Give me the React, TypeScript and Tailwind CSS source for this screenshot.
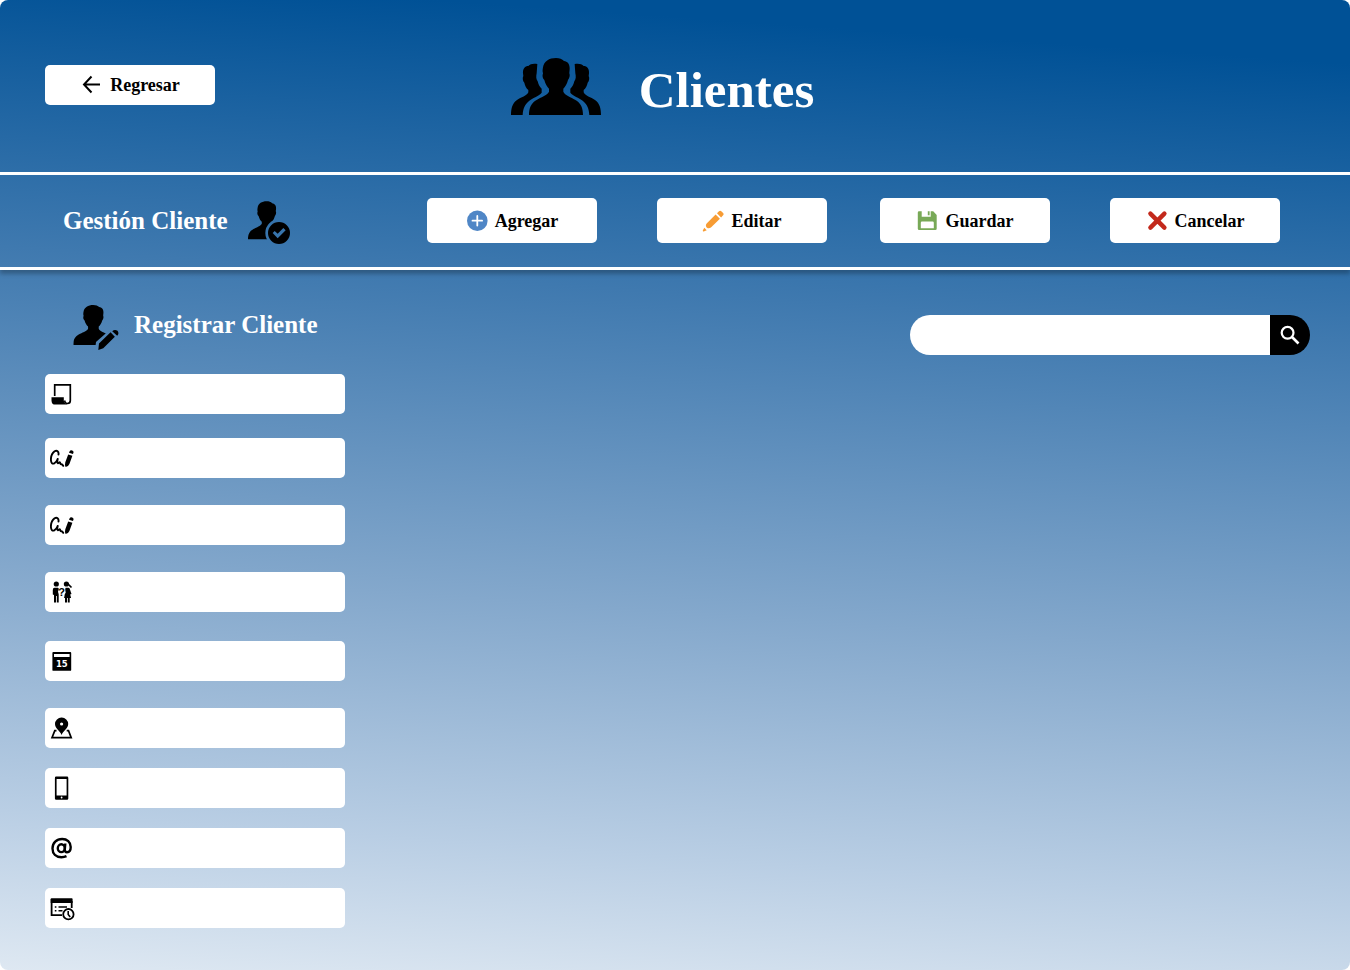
import type { ReactNode } from "react";

const BUST =
  "M81 0C92 0 99 3 105 9C115 10 122 18 122 30C122 38 121 42 121 46C124 52 121 62 117 66C114 78 109 86 103 92V101C107 112 128 118 138 125C156 135 162 150 162 171H0C0 150 6 135 24 125C34 118 55 112 60 101V92C54 86 49 78 46 66C41 62 39 54 42 46C40 40 41 34 42 28C45 10 60 0 81 0Z";

function PeopleIcon() {
  const side =
    "M79 18C66 16 58 18 52 24C42 24 35 32 36 46L37 54C34 58 35 70 40 74C42 84 46 91 52 96V103C48 114 30 118 18 126C4 136 0 152 0 171H35C36 152 41 140 55 128C66 119 84 114 92 104V92C85 86 82 78 80 70C75 64 75 56 77 46Z";
  return (
    <svg className="h-[57px] w-[90px]" viewBox="0 0 270 171" aria-hidden="true">
      <path d={side} />
      <path d={side} transform="translate(270 0) scale(-1 1)" />
      <path d={BUST} transform="translate(54 0)" />
    </svg>
  );
}

function UserCheckIcon() {
  return (
    <svg className="h-[43px] w-[42px]" viewBox="0 0 126 129" aria-hidden="true">
      <mask id="check-cut" maskUnits="userSpaceOnUse" x="0" y="0" width="126" height="129">
        <rect width="126" height="129" fill="#fff" />
        <circle cx="93" cy="96" r="41" fill="#000" />
      </mask>
      <g mask="url(#check-cut)">
        <path d={BUST} transform="translate(0 1) scale(0.69 0.665)" />
      </g>
      <path
        fillRule="evenodd"
        d="M93 63a33 33 0 1 0 0 66a33 33 0 0 0 0-66ZM74 96l6-6 9 8 17-17 7 7-24 24Z"
      />
    </svg>
  );
}

function UserEditIcon() {
  return (
    <svg className="h-[45px] w-[46px]" viewBox="0 0 138 136" aria-hidden="true">
      <mask id="edit-cut" maskUnits="userSpaceOnUse" x="0" y="0" width="138" height="136">
        <rect width="138" height="136" fill="#fff" />
        <path d="M66 136L69 112L123 64L160 94L90 150Z" fill="#000" />
      </mask>
      <g mask="url(#edit-cut)">
        <path d={BUST} transform="scale(0.75 0.708)" />
      </g>
      <path d="M76 136l2-20 35-34 13 14-35 35ZM118 79q8-7 16-1q6 8-1 15Z" />
    </svg>
  );
}

function ArrowIcon() {
  return (
    <svg className="size-6" viewBox="0 0 24 24" fill="none" stroke="currentColor" strokeWidth="2" aria-hidden="true">
      <path d="M20 11.500H4.500M11.500 3.500L4 11.500L11.500 19.500" />
    </svg>
  );
}

function PlusIcon() {
  return (
    <svg className="size-[22px]" viewBox="0 0 22 22" aria-hidden="true">
      <circle cx="11.300" cy="10.700" r="10.300" fill="#4f86c6" />
      <path d="M11.300 5.900v9.600M6.500 10.700h9.600" stroke="#fff" strokeWidth="1.800" strokeLinecap="round" />
    </svg>
  );
}

function PencilIcon() {
  return (
    <svg className="size-[22px]" viewBox="0 0 22 22" fill="#f79c34" aria-hidden="true">
      <path d="M13.600 4.400l4.300 4.300L9.200 17.300q-1.600 1.300-3.400.900Q3.800 17.600 3.900 15.500q0-1.200 1-2.200ZM15 3.300l2-2.100q1.200-1 2.300 0l1.800 1.900q1 1.200 0 2.200l-2 2.100ZM2.300 17.800l2.400 2.400-2.900 1.300q-1.100.3-1-.9Z" />
    </svg>
  );
}

function SaveIcon() {
  return (
    <svg className="size-[22px]" viewBox="0 0 22 22" aria-hidden="true">
      <path
        fill="#78a957"
        fillRule="evenodd"
        d="M3 1.300h2.700v5.400h9V1.300h2.500l3.500 3.600v13.800q0 1.400-1.400 1.400H3.200q-1.400 0-1.400-1.400V2.500q0-1.200 1.200-1.200ZM6 11.600q-1.200 0-1.200 1.200v5.500h13v-5.500q0-1.200-1.200-1.200ZM11.800 1.300h1.800v4h-1.800Z"
      />
    </svg>
  );
}

function CrossIcon() {
  return (
    <svg className="size-[22px]" viewBox="0 0 22 22" aria-hidden="true">
      <path d="M4.400 3.600l14 14M18.400 3.600L4.400 17.600" stroke="#c3291c" strokeWidth="4.400" strokeLinecap="round" />
    </svg>
  );
}

function SearchIcon() {
  return (
    <svg className="size-6" viewBox="0 0 24 24" fill="none" stroke="#fff" strokeWidth="2.200" aria-hidden="true">
      <circle cx="9.600" cy="9.800" r="5.900" />
      <path d="M14 14l6.500 6.500" strokeWidth="2.600" />
    </svg>
  );
}

function ScrollIcon() {
  return (
    <svg className="size-6" viewBox="0 0 24 24" aria-hidden="true">
      <path
        d="M4.700 14V2.900h15.600V18.500q0 3-2.800 3t-2.700-3"
        fill="none"
        stroke="#000"
        strokeWidth="1.700"
      />
      <path d="M1.500 15.200h12.300v3.200q0 2.500 3.700 4.200H5.500q-4 0-4-4.200Z" />
    </svg>
  );
}

function SignatureIcon() {
  return (
    <svg className="size-6" viewBox="0 0 24 24" aria-hidden="true">
      <path
        d="M8.500 8.600C9 5.200 6.800 3.900 4.600 5.200C2.200 7 .900 10.500 .900 13.500C.900 17 2.400 18.300 4.300 17.300C5.800 16.500 6.900 15 7.700 13C7.200 15 6.900 17 7.900 17.200C8.700 17.300 9.200 16 9.900 16.300C10.600 16.700 10 18.300 11 18.300C11.900 18.200 12.200 18 13.200 19.800"
        fill="none"
        stroke="#000"
        strokeWidth="1.900"
        strokeLinecap="round"
        strokeLinejoin="round"
      />
      <path d="M18.200 8.400l4.200 1.300-3 8.200q-.9 2.300-3.800 3.200-1.100-2.100-.3-4.800ZM19 6.800l.5-1.400q.8-1.600 2.800-1 1.700.8 1.200 2.400l-.6 1.300Z" />
    </svg>
  );
}

function PeopleQuestionIcon() {
  return (
    <svg className="size-6" viewBox="0 0 24 24" aria-hidden="true">
      <circle cx="6.300" cy="4" r="2.600" />
      <circle cx="16.400" cy="4" r="2.600" />
      <path d="M17.500 3.500l4 4" stroke="#000" strokeWidth="1.700" />
      <path d="M4.500 7.800h3.400l1 1-.9 3 .7 2.500v8.300H7V16h-.8v6.600H4V15l-1.200-.5V10q0-2.200 1.700-2.200ZM15.600 7.800h2.700q1.200 0 1.600 1.400L21.500 14l-1.300.6.900 3.400h-1.400v4.600h-1.900V18H17v4.600h-2V18h-.9l.7-4 .9-1.200q-.3-2-.5-3.500Z" />
      <text x="11.600" y="16" textAnchor="middle" fontSize="11" fontWeight="700" className="font-['Liberation_Sans',sans-serif]">
        ?
      </text>
    </svg>
  );
}

function CalendarIcon() {
  return (
    <svg className="size-6" viewBox="0 0 24 24" aria-hidden="true">
      <path
        fillRule="evenodd"
        d="M3.300 3h17q.9 0 .9.900v17q0 .9-.9.900h-17q-.9 0-.9-.9v-17q0-.9.900-.9ZM4 5v3h15.600V5Z"
      />
      <text x="11.800" y="17.900" textAnchor="middle" fill="#fff" fontSize="8.500" fontWeight="700" className="font-['DejaVu_Sans',sans-serif]">
        15
      </text>
    </svg>
  );
}

function MapPinIcon() {
  return (
    <svg className="size-6" viewBox="0 0 24 24" aria-hidden="true">
      <path d="M6.500 14.600H4.800L2 21.700H21.200L18.500 14.600H16.700" fill="none" stroke="#000" strokeWidth="1.700" />
      <path
        fillRule="evenodd"
        d="M11.600 1.600a6.500 6.500 0 0 1 6.600 6.500c0 4.500-4.800 6.300-6.600 11C9.800 14.400 5 12.600 5 8.100a6.500 6.500 0 0 1 6.600-6.500ZM11.600 6.400a1.600 1.600 0 1 0 0 3.200a1.600 1.600 0 0 0 0-3.200Z"
      />
    </svg>
  );
}

function PhoneIcon() {
  return (
    <svg className="size-6" viewBox="0 0 24 24" aria-hidden="true">
      <path
        fillRule="evenodd"
        d="M6.200.6h10.800q1.300 0 1.300 1.300v20.600q0 1.300-1.300 1.300H6.200q-1.300 0-1.300-1.300V1.900Q4.900.6 6.200.6ZM6.600 3v16.400h10V3Z"
      />
      <circle cx="11.600" cy="21.500" r=".9" fill="#fff" />
    </svg>
  );
}

function AtIcon() {
  return (
    <svg className="size-6" viewBox="0 0 24 24" fill="none" stroke="#000" strokeWidth="2.400" aria-hidden="true">
      <ellipse cx="11.300" cy="12.200" rx="3.500" ry="3.900" />
      <path d="M15.300 7.500L14.800 13.500C14.800 15.500 15.600 16.200 17 16.200C19.500 16.200 20.700 14 20.700 11C20.700 6 17 3 12.200 3C6.500 3 2.500 7 2.500 12.500C2.500 17.800 6 21.200 11.500 21.200C13.500 21.200 15.200 20.800 16.500 20.200" />
    </svg>
  );
}

function ScheduleIcon() {
  return (
    <svg className="size-[26px]" viewBox="0 0 26 26" fill="none" stroke="#000" aria-hidden="true">
      <path d="M1.600 4v16.200h10.400M21.700 6v7" strokeWidth="1.800" />
      <path d="M.700 4q0-.8.800-.8h20.300q.8 0 .8.800v4H.700Z" fill="#000" stroke="none" />
      <path d="M4.800 12h1.600M8.500 12h8.500M4.800 15.700h1.600M8.500 15.700h4" strokeWidth="1.600" />
      <circle cx="18.400" cy="19.200" r="5.200" strokeWidth="1.800" />
      <path d="M18.200 16v3.500l2 2.400" strokeWidth="1.600" />
    </svg>
  );
}

type Field = { name: string; label: string; type: string; spacing: string; icon: ReactNode };

const fields: Field[] = [
  { name: "documento", label: "Documento", type: "text", spacing: "mt-6", icon: <ScrollIcon /> },
  { name: "nombre", label: "Nombre", type: "text", spacing: "mt-6", icon: <SignatureIcon /> },
  { name: "apellido", label: "Apellido", type: "text", spacing: "mt-[27px]", icon: <SignatureIcon /> },
  { name: "genero", label: "Género", type: "text", spacing: "mt-[27px]", icon: <PeopleQuestionIcon /> },
  { name: "nacimiento", label: "Fecha de nacimiento", type: "text", spacing: "mt-[29px]", icon: <CalendarIcon /> },
  { name: "direccion", label: "Dirección", type: "text", spacing: "mt-[27px]", icon: <MapPinIcon /> },
  { name: "telefono", label: "Teléfono", type: "tel", spacing: "mt-5", icon: <PhoneIcon /> },
  { name: "correo", label: "Correo", type: "email", spacing: "mt-5", icon: <AtIcon /> },
  { name: "registro", label: "Fecha de registro", type: "text", spacing: "mt-5", icon: <ScheduleIcon /> },
];

function ActionButton({ icon, children }: { icon: ReactNode; children: ReactNode }) {
  return (
    <button
      type="button"
      className="flex h-[45px] w-[170px] items-center justify-center gap-[7px] rounded-[5px] bg-white text-lg font-bold"
    >
      {icon}
      {children}
    </button>
  );
}

export default function App() {
  return (
    <div className="flex min-h-screen flex-col overflow-hidden rounded-lg bg-[linear-gradient(184deg,#005196_6%,#3f79af_32%,#84a8cc_62%,#b9cee4_85%,#dee8f2_100%)] font-['Liberation_Serif',serif] text-black">
      <header className="grid h-[175px] grid-cols-[1fr_auto_1fr] items-center border-b-[3px] border-white pr-[70px] pb-[2px] pl-[45px]">
        <button
          type="button"
          className="flex h-10 w-[170px] items-center justify-center gap-[6px] rounded-[5px] bg-white text-lg font-bold"
        >
          <ArrowIcon />
          Regresar
        </button>
        <div className="flex items-center gap-[38px] pt-[3px]">
          <PeopleIcon />
          <h1 className="pt-[7px] text-[51px] leading-[60px] font-bold text-white">Clientes</h1>
        </div>
      </header>

      <section className="flex h-[95px] items-center justify-between border-b-[3px] border-white pr-[70px] pb-px pl-[63px] shadow-[0_4px_4px_rgba(0,0,0,0.25)]">
        <div className="flex items-center gap-5">
          <h2 className="text-[25px] leading-8 font-bold text-white">Gestión Cliente</h2>
          <div className="pt-1">
            <UserCheckIcon />
          </div>
        </div>
        <div className="flex gap-[53px]">
          <div className="flex gap-[60px]">
            <ActionButton icon={<PlusIcon />}>Agregar</ActionButton>
            <ActionButton icon={<PencilIcon />}>Editar</ActionButton>
          </div>
          <div className="flex gap-[60px]">
            <ActionButton icon={<SaveIcon />}>Guardar</ActionButton>
            <ActionButton icon={<CrossIcon />}>Cancelar</ActionButton>
          </div>
        </div>
      </section>

      <main className="flex items-start justify-between pt-[35px] pr-10 pb-[42px] pl-[45px]">
        <form className="w-[300px]">
          <div className="flex items-start gap-[15px] pl-7">
            <UserEditIcon />
            <h2 className="pt-1 text-[25px] leading-8 font-bold text-white">Registrar Cliente</h2>
          </div>
          {fields.map((field) => (
            <label
              key={field.name}
              className={`flex h-10 items-center gap-2 rounded-[5px] bg-white pl-[5px] ${field.spacing}`}
            >
              {field.icon}
              <input
                type={field.type}
                name={field.name}
                aria-label={field.label}
                className="h-full min-w-0 flex-1 bg-transparent text-base outline-none"
              />
            </label>
          ))}
        </form>

        <form role="search" className="mt-[10px] flex h-10 w-[400px]">
          <input
            type="search"
            aria-label="Buscar cliente"
            className="min-w-0 flex-1 rounded-l-full bg-white px-5 text-base outline-none"
          />
          <button
            type="submit"
            aria-label="Buscar"
            className="flex w-10 items-center justify-center rounded-r-full bg-black"
          >
            <SearchIcon />
          </button>
        </form>
      </main>
    </div>
  );
}
